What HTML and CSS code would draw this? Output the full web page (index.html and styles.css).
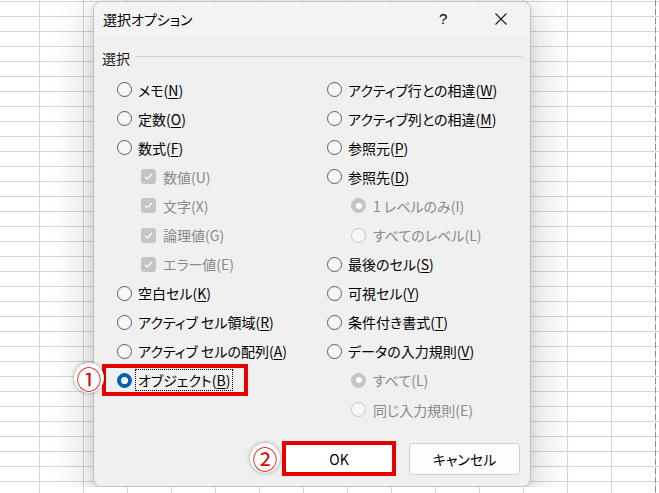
FILE: index.html
```html
<!DOCTYPE html>
<html lang="ja">
<head>
<meta charset="utf-8">
<title>選択オプション</title>
<link rel="stylesheet" href="styles.css">
</head>
<body>
<div class="dialog">
  <div class="titlebar">
    <span class="title">選択オプション</span>
    <span class="help">?</span>
    <span class="close"><svg width="12" height="12" viewBox="0 0 12 12"><path d="M0.5 0.5 L11.5 11.5 M11.5 0.5 L0.5 11.5" stroke="#1a1a1a" stroke-width="1.1" fill="none"/></svg></span>
  </div>
  <div class="group">
    <div class="legend"><span>選択</span><span class="legend-line"></span></div>
    <div class="cols">
      <div class="col">
        <div class="row"><span class="radio"></span><span class="lbl">メモ(<u>N</u>)</span></div>
        <div class="row"><span class="radio"></span><span class="lbl">定数(<u>O</u>)</span></div>
        <div class="row"><span class="radio"></span><span class="lbl">数式(<u>F</u>)</span></div>
        <div class="row sub disabled"><span class="check"><svg width="9" height="7" viewBox="0 0 9 7"><path d="M1 3.6 L3.4 6 L8 1" stroke="#fff" stroke-width="1.2" fill="none"/></svg></span><span class="lbl">数値(U)</span></div>
        <div class="row sub disabled"><span class="check"><svg width="9" height="7" viewBox="0 0 9 7"><path d="M1 3.6 L3.4 6 L8 1" stroke="#fff" stroke-width="1.2" fill="none"/></svg></span><span class="lbl">文字(X)</span></div>
        <div class="row sub disabled"><span class="check"><svg width="9" height="7" viewBox="0 0 9 7"><path d="M1 3.6 L3.4 6 L8 1" stroke="#fff" stroke-width="1.2" fill="none"/></svg></span><span class="lbl">論理値(G)</span></div>
        <div class="row sub disabled"><span class="check"><svg width="9" height="7" viewBox="0 0 9 7"><path d="M1 3.6 L3.4 6 L8 1" stroke="#fff" stroke-width="1.2" fill="none"/></svg></span><span class="lbl">エラー値(E)</span></div>
        <div class="row"><span class="radio"></span><span class="lbl">空白セル(<u>K</u>)</span></div>
        <div class="row"><span class="radio"></span><span class="lbl">アクティブ セル領域(<u>R</u>)</span></div>
        <div class="row"><span class="radio"></span><span class="lbl">アクティブ セルの配列(<u>A</u>)</span></div>
        <div class="row marked"><span class="radio on"></span><span class="lbl focus">オブジェクト(<u>B</u>)</span><span class="redbox"></span><span class="marker m1">①</span></div>
      </div>
      <div class="col">
        <div class="row"><span class="radio"></span><span class="lbl">アクティブ行との相違(<u>W</u>)</span></div>
        <div class="row"><span class="radio"></span><span class="lbl">アクティブ列との相違(<u>M</u>)</span></div>
        <div class="row"><span class="radio"></span><span class="lbl">参照元(<u>P</u>)</span></div>
        <div class="row"><span class="radio"></span><span class="lbl">参照先(<u>D</u>)</span></div>
        <div class="row sub disabled"><span class="radio dis-on"></span><span class="lbl">1 レベルのみ(I)</span></div>
        <div class="row sub disabled"><span class="radio dis"></span><span class="lbl">すべてのレベル(L)</span></div>
        <div class="row"><span class="radio"></span><span class="lbl">最後のセル(<u>S</u>)</span></div>
        <div class="row"><span class="radio"></span><span class="lbl">可視セル(<u>Y</u>)</span></div>
        <div class="row"><span class="radio"></span><span class="lbl">条件付き書式(<u>T</u>)</span></div>
        <div class="row"><span class="radio"></span><span class="lbl">データの入力規則(<u>V</u>)</span></div>
        <div class="row sub disabled"><span class="radio dis-on"></span><span class="lbl">すべて(L)</span></div>
        <div class="row sub disabled"><span class="radio dis"></span><span class="lbl">同じ入力規則(E)</span></div>
      </div>
    </div>
  </div>
  <div class="buttons">
    <div class="okwrap"><button class="btn ok">OK</button><span class="marker m2">②</span></div>
    <button class="btn">キャンセル</button>
  </div>
</div>
</body>
</html>
```

FILE: styles.css
```css
* { box-sizing: border-box; }

html {
  height: 100%;
  background-color: #ffffff;
  background-image:
    linear-gradient(to bottom, #8f8f8f 0, #8f8f8f 6px, transparent 6px, transparent 9px),
    linear-gradient(to bottom, #d6d6d6 1px, transparent 1px),
    linear-gradient(to right, #d6d6d6 1px, transparent 1px);
  background-size: 1px 9px, 100% 15px, 44px 100%;
  background-position: 655px 0, 0 1px, 39px 0;
  background-repeat: repeat-y, repeat, repeat;
}

body {
  margin: 0;
  padding: 1px 0 0 93px;
  font-family: "Noto Sans CJK JP", "Noto Sans", sans-serif;
  font-feature-settings: "palt";
  font-size: 14px;
  color: #000;
}

.dialog {
  width: 438px;
  height: 486px;
  background: #f0f0f0;
  border: 1px solid #c4c4c4;
  border-radius: 8px;
  box-shadow: 0 10px 45px rgba(0, 0, 0, 0.22), 0 2px 8px rgba(0, 0, 0, 0.10);
  display: flex;
  flex-direction: column;
}

.titlebar {
  height: 34px;
  display: flex;
  align-items: center;
  padding-left: 9px;
  background: #f3f3f3;
  border-radius: 8px 8px 0 0;
}
.title { flex: 1; font-size: 14px; line-height: 20px; }
.help { width: 8px; font-size: 15px; line-height: 20px; font-family: "Liberation Sans", sans-serif; margin-right: 48px; }
.close { width: 12px; height: 12px; display: flex; margin-right: 23px; }

.group { padding: 13px 8px 0 8px; }
.legend {
  display: flex;
  align-items: center;
  height: 18px;
  line-height: 18px;
  color: #1b1b1b;
  font-size: 14px;
}
.legend-line { flex: 1; height: 1px; background: #d2d2d2; margin-left: 6px; margin-top: -3px; }

.cols {
  display: grid;
  grid-template-columns: 210px 1fr;
  padding-left: 15px;
  margin-top: 8px;
}

.row {
  height: 29.1px;
  display: flex;
  align-items: center;
  position: relative;
  white-space: nowrap;
}
.row.sub { padding-left: 24px; }
.lbl { line-height: 20px; margin-left: 6px; }
.row.sub .lbl { margin-left: 7px; }
.disabled { color: #8a8a8a; }
u { text-decoration-thickness: 1px; text-underline-offset: 2px; }

.radio {
  width: 15px;
  height: 15px;
  border-radius: 50%;
  border: 1px solid #5c5c5c;
  background: #f7f7f7;
  flex: none;
  display: flex;
  align-items: center;
  justify-content: center;
}
.radio.on { background: #005fb8; border-color: #005fb8; }
.radio.on::after { content: ""; width: 7px; height: 7px; border-radius: 50%; background: #fff; }
.radio.dis { border-color: #c5c5c5; background: #f8f8f8; }
.radio.dis-on { border-color: #c5c5c5; background: #c5c5c5; }
.radio.dis-on::after { content: ""; width: 6px; height: 6px; border-radius: 50%; background: #fff; }

.check {
  width: 15px;
  height: 15px;
  border-radius: 3px;
  background: #c5c5c5;
  flex: none;
  display: flex;
  align-items: center;
  justify-content: center;
}

.focus { outline: 1px dotted #000; outline-offset: 0; padding: 0 2px; margin-left: 4px; }

.redbox {
  position: absolute;
  left: -15px;
  top: -2px;
  width: 146px;
  height: 32px;
  border: 4px solid #e60000;
}

.marker {
  position: absolute;
  width: 30px;
  height: 30px;
  border-radius: 50%;
  background: #fff;
  box-shadow: 0 0 4px rgba(0, 0, 0, 0.35);
  color: #e60000;
  font-size: 25px;
  line-height: 30px;
  text-align: center;
  font-feature-settings: normal;
}
.m1 { left: -43px; top: -3px; }
.m2 { left: -32px; top: 2px; }

.buttons {
  margin-top: auto;
  display: flex;
  justify-content: flex-end;
  align-items: center;
  gap: 13px;
  padding: 0 10px 10px 0;
}
.okwrap { position: relative; display: flex; }
.btn {
  width: 111px;
  height: 32px;
  background: #fdfdfd;
  border: 1px solid #d0d0d0;
  border-radius: 4px;
  font-family: "Noto Sans CJK JP", sans-serif;
  font-feature-settings: "palt";
  font-size: 14px;
  color: #000;
  padding: 0;
}
.btn.ok {
  width: 114px;
  height: 35px;
  border: 4px solid #e60000;
  border-radius: 0;
  background: #fff;
}
```
